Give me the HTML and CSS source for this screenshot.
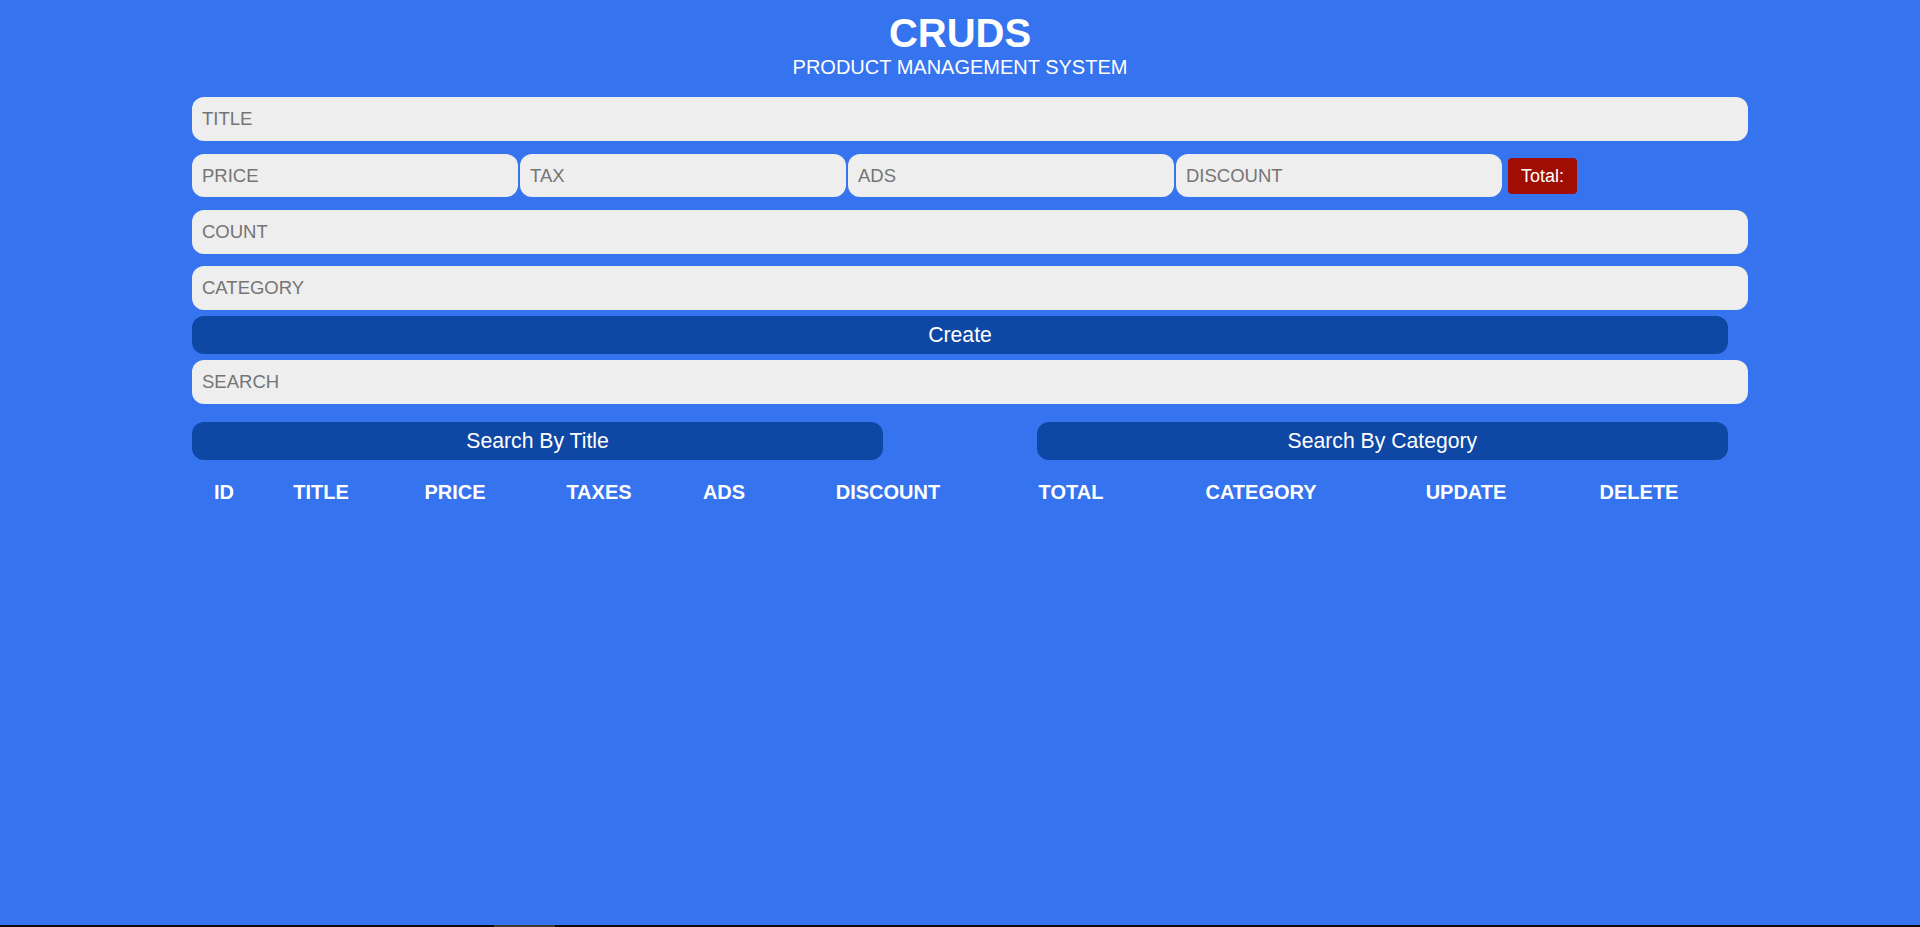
FILE: index.html
```html
<!DOCTYPE html>
<html lang="en">
<head>
<meta charset="UTF-8">
<title>CRUDS</title>
<link rel="stylesheet" href="styles.css">
</head>
<body>
<div class="crud">
  <header class="head">
    <h2 class="logo">CRUDS</h2>
    <p class="subtitle">PRODUCT MANAGEMENT SYSTEM</p>
  </header>
  <div class="inputs">
    <input class="field field-title" type="text" placeholder="TITLE">
    <div class="price">
      <input class="field field-small" type="number" placeholder="PRICE">
      <input class="field field-small" type="number" placeholder="TAX">
      <input class="field field-small" type="number" placeholder="ADS">
      <input class="field field-small" type="number" placeholder="DISCOUNT">
      <small class="total">Total:</small>
    </div>
    <input class="field field-count" type="number" placeholder="COUNT">
    <input class="field field-category" type="text" placeholder="CATEGORY">
    <button class="btn btn-create">Create</button>
  </div>
  <div class="outputs">
    <input class="field field-search" type="text" placeholder="SEARCH">
    <div class="searchblock">
      <button class="btn btn-search">Search By Title</button>
      <button class="btn btn-search">Search By Category</button>
    </div>
    <table class="table">
      <colgroup>
        <col class="c-id">
        <col class="c-title">
        <col class="c-price">
        <col class="c-taxes">
        <col class="c-ads">
        <col class="c-discount">
        <col class="c-total">
        <col class="c-category">
        <col class="c-update">
        <col class="c-delete">
      </colgroup>
      <tr>
        <th>ID</th>
        <th>TITLE</th>
        <th>PRICE</th>
        <th>TAXES</th>
        <th>ADS</th>
        <th>DISCOUNT</th>
        <th>TOTAL</th>
        <th>CATEGORY</th>
        <th>UPDATE</th>
        <th>DELETE</th>
      </tr>
    </table>
  </div>
</div>
<div class="hscroll"><div class="hscroll-thumb"></div></div>
</body>
</html>
```

FILE: styles.css
```css
html, body {
  margin: 0;
  padding: 0;
}
body {
  background: #3673ee;
  min-height: 100vh;
  font-family: "Liberation Sans", Arial, sans-serif;
  color: #fff;
  overflow: hidden;
}
.crud {
  width: 80%;
  margin: 0 auto;
}
.head {
  padding-top: 10px;
  text-align: center;
}
.logo {
  margin: 0;
  font-size: 40px;
  line-height: 46px;
  font-weight: bold;
}
.subtitle {
  margin: 0;
  font-size: 20px;
  line-height: 23px;
}
.inputs {
  margin-top: 18px;
  display: flex;
  flex-direction: column;
  align-items: flex-start;
}
.field {
  box-sizing: content-box;
  border: none;
  outline: none;
  background: #eeeeee;
  border-radius: 12px;
  padding: 0 10px;
  height: 44px;
  font-family: "Liberation Sans", Arial, sans-serif;
  font-size: 18.5px;
  color: #222;
  margin: 0;
}
.field::placeholder {
  color: #757575;
}
.field-title,
.field-count,
.field-category,
.field-search {
  width: 100%;
}
.field-title {
  margin-bottom: 13px;
}
.price {
  display: flex;
  align-items: center;
  gap: 2px;
  margin-bottom: 13px;
}
.field-small {
  width: 306px;
  height: 43px;
  flex: 0 0 auto;
}
.total {
  margin-left: 4px;
  background: #a00d02;
  color: #fff;
  font-size: 18px;
  height: 36px;
  line-height: 36px;
  padding: 0 13px;
  border-radius: 4px;
}
.field-count {
  margin-bottom: 12px;
}
.field-category {
  margin-bottom: 6px;
}
.btn {
  border: none;
  background: #0e47a4;
  color: #fff;
  height: 38px;
  border-radius: 12px;
  font-family: "Liberation Sans", Arial, sans-serif;
  font-size: 21.2px;
  cursor: pointer;
  padding: 0;
}
.btn-create {
  width: 100%;
}
.outputs {
  margin-top: 6px;
}
.field-search {
  display: block;
}
.searchblock {
  display: flex;
  justify-content: space-between;
  margin-top: 18px;
}
.btn-search {
  width: 45%;
}
.table {
  width: 100%;
  table-layout: fixed;
  margin-top: 20px;
  border-collapse: collapse;
}
.c-id { width: 64px; }
.c-title { width: 130px; }
.c-price { width: 138px; }
.c-taxes { width: 150px; }
.c-ads { width: 100px; }
.c-discount { width: 228px; }
.c-total { width: 138px; }
.c-category { width: 242px; }
.c-update { width: 168px; }
.c-delete { width: 178px; }
.table th {
  font-size: 20px;
  font-weight: bold;
  text-align: center;
  padding: 0;
  line-height: 24px;
  color: #fff;
  white-space: nowrap;
}
input[type=number]::-webkit-inner-spin-button,
input[type=number]::-webkit-outer-spin-button {
  -webkit-appearance: none;
  margin: 0;
}
.hscroll {
  position: fixed;
  left: 0;
  right: 0;
  bottom: 0;
  height: 2px;
  background: #0a0a0a;
}
.hscroll-thumb {
  margin-left: 494px;
  width: 61px;
  height: 2px;
  background: #3a3a3a;
}
```
